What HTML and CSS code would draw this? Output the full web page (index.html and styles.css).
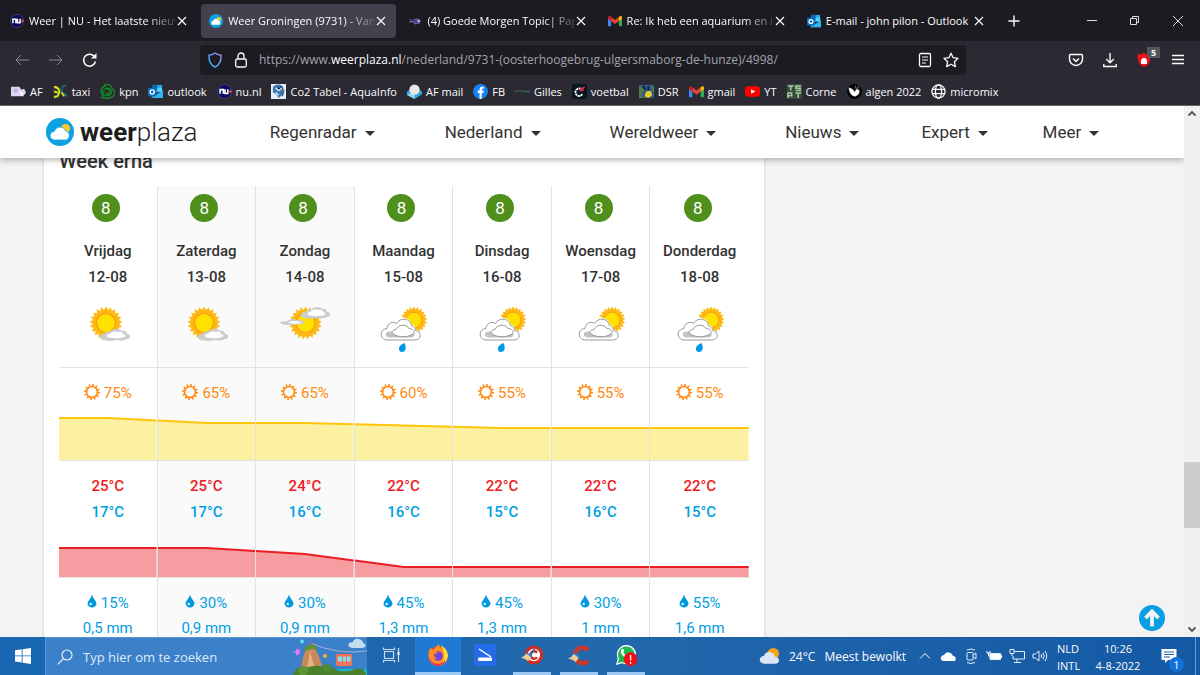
FILE: index.html
```html
<!DOCTYPE html>
<html lang="nl">
<head>
<meta charset="utf-8">
<title>Weer Groningen (9731)</title>
<link rel="stylesheet" href="styles.css">
</head>
<body>
<svg class="defs" aria-hidden="true">
  <symbol id="x" viewBox="0 0 14 14"><path d="M3 3l8 8M11 3l-8 8" stroke="currentColor" stroke-width="1.2" fill="none"/></symbol>
  <symbol id="nu" viewBox="0 0 16 16"><circle cx="8" cy="8" r="7.5" fill="#0b0b5c" stroke="#5b5b9a" stroke-width=".6"/><path d="M3.3 10.500V6h3.400v4.500M8.500 5.500V10h3V5.500" stroke="#fff" stroke-width="1.700" fill="none"/><path d="M12.500 8h3.500M14.200 6.300v3.400" stroke="#f0444c" stroke-width="1.300"/></symbol>
  <symbol id="wp" viewBox="0 0 28 28"><circle cx="14" cy="14" r="14" fill="#0ba1e2"/><circle cx="19.500" cy="10.500" r="4.600" fill="#fdc82f"/><path d="M8.500 22a4.300 4.300 0 0 1-.3-8.600 6 6 0 0 1 11.300-.6 4.800 4.800 0 0 1 .8 9.200z" fill="#fff" stroke="#0ba1e2" stroke-width=".8"/></symbol>
  <symbol id="fish" viewBox="0 0 16 16"><path d="M1 5l4 2q4-3 8-1l2 2-2 3-5 1-3-3-4 1 2-3z" fill="#6a67b5"/><path d="M3 7l9 1M6 9l6 1" stroke="#27255a"/><circle cx="12" cy="8" r="1" fill="#fff"/></symbol>
  <symbol id="gm" viewBox="0 0 16 16"><path d="M0 4v10h3.600V7z" fill="#4285f4"/><path d="M16 4v10h-3.600V7z" fill="#34a853"/><path d="M3.600 3.500L8 6.800l4.400-3.300v4.600L8 11.400 3.600 8.100z" fill="#ea4335"/><path d="M0 4.200C0 2 2 1.800 3.600 3.500v4.600L0 5.500z" fill="#c5221f"/><path d="M16 4.200C16 2 14 1.800 12.400 3.500v4.600L16 5.500z" fill="#fbbc04"/></symbol>
  <symbol id="ol" viewBox="0 0 16 16"><path d="M5 1h10v8H5z" fill="#28a8ea"/><path d="M5 1h5v5H5z" fill="#0a67c0"/><path d="M10 4h5v4h-5z" fill="#50d9ff"/><path d="M4 7l6 4 6-4v8H4z" fill="#1490df"/><path d="M4 15l12-8v8z" fill="#35b5f0"/><rect x="0" y="4" width="9" height="9" rx="1" fill="#0f6cbd"/><circle cx="4.500" cy="8.500" r="2.200" stroke="#fff" stroke-width="1.400" fill="none"/></symbol>
  <symbol id="sun" viewBox="-17 -17 34 34"><g fill="#fdb813"><path id="t" d="M0-16.500L14.300 8.250H-14.300z"/><use href="#t" transform="rotate(17.143)"/><use href="#t" transform="rotate(34.286)"/><use href="#t" transform="rotate(51.429)"/><use href="#t" transform="rotate(68.571)"/><use href="#t" transform="rotate(85.714)"/><use href="#t" transform="rotate(102.857)"/></g><circle r="9.500" fill="#ffe100" stroke="#fa9a1c" stroke-width="1.200"/></symbol>
  <symbol id="puff" viewBox="0 0 32 13"><path d="M5 12.500c-6-1-5-7 .5-6.500C7 3 10 3 11.500 3.500 14 0 21 0 23 3c4-1 5 2 5 3 5 0 4 5 0 5-3 2-8 2-10 1-4 1-9 1.500-13 0z" fill="#cdcdcd"/><path d="M10 9.500c-4-1-2-4 1-3.500 1-3 6-3 8-2 3-1 5 0 5 2 3 0 3 3 0 3.500-4 1-10 1-14 0z" fill="#fff"/></symbol>
  <symbol id="w-clear" viewBox="0 0 52 52"><use href="#sun" x="9" y="3" width="34" height="34"/><use href="#puff" x="19" y="25" width="32" height="13"/></symbol>
  <symbol id="w-veil" viewBox="0 0 52 52" overflow="visible"><use href="#sun" x="11.500" y="3" width="34" height="34"/><use href="#puff" x="23" y="3" width="31" height="13"/><path d="M3 19.500c1-2 5-1 7-1.500 4-3 8-2 10-1 4-1 5 1 8 2-1 3-7 2-10 3H9c-3 0-5-1-6-2.500z" fill="#cdcdcd"/><path d="M11 19.500c4-2 9-2 14 0-4 2-10 1-14 0z" fill="#fff"/></symbol>
  <symbol id="w-cloud" viewBox="0 0 52 52"><use href="#sun" x="25" y="3" width="28" height="28"/><path d="M12 37C3 37 3 26 11 25.500c0-5 6-8 9.500-5 4-7 14-5 15 2 3 1 4 3 4 5 7 2 6 9.500-1 9.500z" fill="#fff" stroke="#fff" stroke-width="3"/><path d="M13 37C4 37 4 26 12 25.500c0-5 6-8 9.500-5 4-7 14-5 15 2 3 1 4 3 4 5 7 2 6 9.500-1 9.500z" fill="#fff" stroke="#999" stroke-width="1"/><path d="M14 34.500c-5-1-4-7 2-6h19c6-1 6 6 1 6z" fill="#c3c3c3"/><path d="M19 31.500c-4-2-1-5 2-5 2-5 10-6 13-1 5 0 7 5 3 6-5 3-13 3-18 0z" fill="#fff" stroke="#8d8d8d" stroke-width=".9"/></symbol>
  <symbol id="w-rain" viewBox="0 0 52 52"><use href="#w-cloud" width="52" height="52"/><path d="M29.500 40q1.500 3 1.200 5.500-.8 3.500-3.700 3.500-3.400-.2-3-4 .5-3.200 5.500-5z" fill="#0099e5"/></symbol>
  <symbol id="s" viewBox="0 0 16 16"><g fill="none" stroke="#ff8a0f"><circle cx="8" cy="8" r="5.500" stroke-width="1.700"/><circle cx="8" cy="8" r="7" stroke-width="1.900" stroke-dasharray="1.600 2.065"/></g></symbol>
  <symbol id="d" viewBox="0 0 10 14"><path d="M5 .5q.7 3 2.800 5.500Q9.500 8 9.500 9.500a4.500 4 0 0 1-9 0Q.5 8 2.200 6 4.300 3.500 5 .5z" fill="#0099e0"/><circle cx="3.700" cy="10" r="1.200" fill="#e6f6fd"/></symbol>
  <symbol id="broom" viewBox="0 0 24 24"><path d="M21 4l-8 9" stroke="#2a67a5" stroke-width="3"/><path d="M8 10q6 0 8 6l-5 6Q7 18 0 17q6-2 8-7z" fill="#f5d6a2"/><path d="M8 10q5 1 8 6" stroke="#2686c9" stroke-width="2.500" fill="none"/><path d="M4 17q5-1 7 4M7 14q5 1 6 5" stroke="#d6a76a" fill="none" stroke-width=".7"/></symbol>
</svg>

<header class="browser">
  <div class="tabstrip">
    <div class="tabs" role="tablist">
      <div class="tab" role="tab"><svg class="fav"><use href="#nu"/></svg><span class="tab-title">Weer | NU - Het laatste nieuw</span><button class="close" aria-label="Tabblad sluiten"><svg><use href="#x"/></svg></button></div>
      <div class="tab active" role="tab" aria-selected="true"><svg class="fav"><use href="#wp"/></svg><span class="tab-title">Weer Groningen (9731) - Van</span><button class="close" aria-label="Tabblad sluiten"><svg><use href="#x"/></svg></button></div>
      <div class="tab" role="tab"><svg class="fav"><use href="#fish"/></svg><span class="tab-title">(4) Goede Morgen Topic| Pagi</span><button class="close" aria-label="Tabblad sluiten"><svg><use href="#x"/></svg></button></div>
      <div class="tab" role="tab"><svg class="fav"><use href="#gm"/></svg><span class="tab-title">Re: Ik heb een aquarium en is</span><button class="close" aria-label="Tabblad sluiten"><svg><use href="#x"/></svg></button></div>
      <div class="tab" role="tab"><svg class="fav"><use href="#ol"/></svg><span class="tab-title full">E-mail - john pilon - Outlook</span><button class="close" aria-label="Tabblad sluiten"><svg><use href="#x"/></svg></button></div>
    </div>
    <button class="icon-btn new-tab" aria-label="Nieuw tabblad"><svg viewBox="0 0 16 16"><path d="M8 2.500v11M2.500 8h11" stroke="#fbfbfe" stroke-width="1.400"/></svg></button>
    <div class="window-controls">
      <button class="icon-btn" aria-label="Minimaliseren"><svg viewBox="0 0 16 16"><path d="M3 7.500h10" stroke="#ddd"/></svg></button>
      <button class="icon-btn" aria-label="Verkleinen"><svg viewBox="0 0 16 16"><path d="M3.500 5.500h6v6h-6zM5.500 5.500v-2h6v6h-2" stroke="#ddd" fill="none"/></svg></button>
      <button class="icon-btn" aria-label="Sluiten"><svg viewBox="0 0 16 16"><path d="M3 3l10 10M13 3L3 13" stroke="#ddd"/></svg></button>
    </div>
  </div>

  <div class="toolbar">
    <div class="nav-buttons">
      <button class="icon-btn dim" aria-label="Vorige"><svg viewBox="0 0 16 16"><path d="M15 8H2M7 3L2 8l5 5" stroke="currentColor" fill="none"/></svg></button>
      <button class="icon-btn dim" aria-label="Volgende"><svg viewBox="0 0 16 16"><path d="M1 8h13M9 3l5 5-5 5" stroke="currentColor" fill="none"/></svg></button>
      <button class="icon-btn" aria-label="Vernieuwen"><svg viewBox="0 0 16 16"><path d="M13.500 9.500A6 6 0 1 1 12 4" stroke="#fbfbfe" stroke-width="1.500" fill="none"/><path d="M14.500 1v5.500H9z" fill="#fbfbfe"/></svg></button>
    </div>
    <div class="urlbar">
      <svg class="i16" viewBox="0 0 16 16"><defs><linearGradient id="sh" x1="0" y1="1" x2="1" y2="0"><stop offset="0" stop-color="#1fb9f5"/><stop offset="1" stop-color="#a48bff"/></linearGradient></defs><path d="M8 1q3 2 6 2.200Q14.500 12 8 15 1.500 12 2 3.200 5 3 8 1z" fill="none" stroke="url(#sh)" stroke-width="1.400"/></svg>
      <svg class="i16" viewBox="0 0 16 16"><rect x="2.700" y="7" width="10.600" height="8" rx="1.500" fill="none" stroke="#fbfbfe" stroke-width="1.300"/><path d="M5 7V4a3 3 0 0 1 6 0v3" fill="none" stroke="#fbfbfe" stroke-width="1.300"/></svg>
      <div class="url" role="textbox" contenteditable="true" spellcheck="false" aria-label="Adres">https://www.<b>weerplaza.nl</b>/nederland/9731-(oosterhoogebrug-ulgersmaborg-de-hunze)/4998/</div>
      <button class="icon-btn" aria-label="Leesmodus"><svg viewBox="0 0 16 16"><rect x="2.500" y="1.500" width="11" height="13" rx="1.500" fill="none" stroke="#fbfbfe" stroke-width="1.300"/><path d="M5 5h6M5 8h6M5 11h4" stroke="#fbfbfe" stroke-width="1.200"/></svg></button>
      <button class="icon-btn" aria-label="Bladwijzer"><svg viewBox="0 0 16 16"><path d="M8 1.200l2.100 4.500 4.900.6-3.600 3.400.9 4.900L8 12.200l-4.300 2.400.9-4.900L1 6.300l4.900-.6z" fill="none" stroke="#fbfbfe" stroke-width="1.300" stroke-linejoin="round"/></svg></button>
    </div>
    <div class="actions">
      <button class="icon-btn" aria-label="Pocket"><svg viewBox="0 0 16 16"><path d="M2.500 2.500h11q1 0 1 1V7a6.500 6.500 0 0 1-13 0V3.500q0-1 1-1z" fill="none" stroke="#fbfbfe" stroke-width="1.400"/><path d="M5 6.500L8 9.400l3-2.900" fill="none" stroke="#fbfbfe" stroke-width="1.500"/></svg></button>
      <button class="icon-btn" aria-label="Downloads"><svg viewBox="0 0 16 16"><path d="M8 1v9.500M4.200 7L8 10.700 11.800 7M1.800 12v2.500h12.400V12" fill="none" stroke="#fbfbfe" stroke-width="1.400"/></svg></button>
      <button class="icon-btn badge-host" aria-label="Blokkering"><svg viewBox="0 0 16 16"><path d="M8 1q3 1.500 6.500 1.500Q15 12 8 15.500 1 12 1.500 2.500 5 2.500 8 1z" fill="#f01018"/><path d="M5 7.500h6V12H5zM6.300 7.500V6h3.400v1.500" fill="#fff"/></svg><span class="badge">5</span></button>
      <button class="icon-btn" aria-label="Menu"><svg viewBox="0 0 16 16"><path d="M2 3.500h12M2 7.500h12M2 11.500h12" stroke="#fbfbfe" stroke-width="1.300"/></svg></button>
    </div>
  </div>

  <nav class="bookmarks" aria-label="Bladwijzers">
    <a href="#"><svg viewBox="0 0 16 16"><path d="M0 3h9l2 3 3-1 2 4-3 4H0z" fill="#dcd8f2"/><path d="M3 5h4v4H3z" fill="#bcb4e0"/><path d="M9 8l4 1-2 4z" fill="#fff"/></svg>AF</a>
    <a href="#"><svg viewBox="0 0 16 16"><path d="M1 3.500q4-1 6 4.500l-2 5-4 1M1 8l4 1" fill="none" stroke="#d8dc20" stroke-width="2.200"/><path d="M14 1.500q-5 0-5 5 0 3 5 5l1 2" fill="none" stroke="#1f6470" stroke-width="2.200"/><path d="M9 9l3 4" stroke="#d8dc20" stroke-width="2"/></svg>taxi</a>
    <a href="#"><svg viewBox="0 0 16 16"><path d="M4 1q8-2 9 4 5 4 1 8-6 4-12 1 2-2-1-5 0-6 5-7M6 4.500q5-1 6.500 3.500-1 5-6 4.500-5-1-3-5 2-4 5-2 3 2 1 5-3 1-3.500-1.500" fill="none" stroke="#0d9a22" stroke-width="1.200"/></svg>kpn</a>
    <a href="#"><svg><use href="#ol"/></svg>outlook</a>
    <a href="#"><svg><use href="#nu"/></svg>nu.nl</a>
    <a href="#"><svg viewBox="0 0 16 16"><path d="M0 0h16v16H0z" fill="#e6eef5"/><path d="M2 3q6-5 11 0v8l-5 4q-2-5-6-6z" fill="#3a78b5"/><path d="M5 4l3 3 4-3M5 9l3 3" stroke="#e6eef5" stroke-width="1.600"/><path d="M10 2l4 5-2 6" stroke="#173d6b" fill="none"/></svg>Co2 Tabel - AquaInfo</a>
    <a href="#"><svg viewBox="0 0 16 16"><path d="M0 8l8-5 8 5v3l-8 5-8-4z" fill="#2ea7e0"/><path d="M0 11l8 5V9z" fill="#9ed5f1"/><circle cx="8" cy="6" r="5.500" fill="#e9e7e4"/></svg>AF mail</a>
    <a href="#"><svg viewBox="0 0 16 16"><circle cx="8" cy="8" r="8" fill="#1382f5"/><path d="M7 16V9.500H5V7h2V5.500Q7 3 10 3h1.500v2H10Q9.300 5 9.300 6v1h2.200l-.4 2.500H9.300V16z" fill="#fff"/></svg>FB</a>
    <a href="#"><svg viewBox="0 0 16 16"><path d="M0 7.500h9" stroke="#446b33" stroke-width="1.400" stroke-dasharray="2 .5"/><path d="M9 8h7" stroke="#327286" stroke-width="1.400" stroke-dasharray="2 .5"/></svg>Gilles</a>
    <a href="#"><svg viewBox="0 0 16 16"><rect width="16" height="16" rx="2.500" fill="#051820"/><path d="M11 11a4 4 0 1 1-2-6" fill="none" stroke="#fff" stroke-width="2" stroke-dasharray="2.500 .6"/><path d="M8 6q3-4 6-3l-2 3 1 1-4 1z" fill="#ef2544"/></svg>voetbal</a>
    <a href="#"><svg viewBox="0 0 16 16"><path d="M0 1h16v14H0z" fill="#315c87"/><path d="M0 2l6 3-4 8 5 2H0zM12 1l4 3v6z" fill="#567b46"/><path d="M7 9q3-3 6-1l1 4-4 3-4-2z" fill="#e7cb26"/><path d="M4 2l3 4M10 2v5" stroke="#0b2139" stroke-width="2"/></svg>DSR</a>
    <a href="#"><svg><use href="#gm"/></svg>gmail</a>
    <a href="#"><svg viewBox="0 0 16 16"><rect y="2.500" width="16" height="11" rx="3" fill="#f00"/><path d="M6.500 5.500v5L11 8z" fill="#fff"/></svg>YT</a>
    <a href="#"><svg viewBox="0 0 16 16"><path d="M0 0h16v16H0z" fill="#384c3c"/><path d="M1 2h6M4 2v5M15 2H9.500v2.500H14V7H9M1 15V9.500h4v3H1M9 9.500h6M12 9.500V15" fill="none" stroke="#a7c9a0" stroke-width="1.600"/></svg>Corne</a>
    <a href="#"><svg viewBox="0 0 16 16"><circle cx="8" cy="8" r="8" fill="#050505"/><path d="M2 4q5 1 6 5 2-5 5-2 1 4-4 6-6 0-7-9zM9 2l1 4M13 2l-3 5" fill="#fff" stroke="#fff" stroke-width=".5"/></svg>algen 2022</a>
    <a href="#"><svg viewBox="0 0 16 16"><g fill="none" stroke="#fbfbfe" stroke-width="1.400"><circle cx="8" cy="8" r="7"/><ellipse cx="8" cy="8" rx="3.300" ry="7"/><path d="M1.500 5.700h13M1.500 10.300h13"/></g></svg>micromix</a>
  </nav>
</header>

<div class="viewport">
  <div class="page">
    <header class="site-header">
      <a class="logo" href="#"><svg><use href="#wp"/></svg><span><b>weer</b>plaza</span></a>
      <nav class="site-nav">
        <a href="#">Regenradar</a><a href="#">Nederland</a><a href="#">Wereldweer</a><a href="#">Nieuws</a><a href="#">Expert</a><a href="#">Meer</a>
      </nav>
    </header>
    <main class="card">
      <h2>Week erna</h2>
      <table class="forecast">
        <thead>
          <tr>
            <th scope="col"><span class="score">8</span>Vrijdag<br>12-08<svg class="weather"><use href="#w-clear"/></svg></th>
            <th scope="col" class="weekend"><span class="score">8</span>Zaterdag<br>13-08<svg class="weather"><use href="#w-clear"/></svg></th>
            <th scope="col" class="weekend"><span class="score">8</span>Zondag<br>14-08<svg class="weather"><use href="#w-veil"/></svg></th>
            <th scope="col"><span class="score">8</span>Maandag<br>15-08<svg class="weather"><use href="#w-rain"/></svg></th>
            <th scope="col"><span class="score">8</span>Dinsdag<br>16-08<svg class="weather"><use href="#w-rain"/></svg></th>
            <th scope="col"><span class="score">8</span>Woensdag<br>17-08<svg class="weather"><use href="#w-cloud"/></svg></th>
            <th scope="col"><span class="score">8</span>Donderdag<br>18-08<svg class="weather"><use href="#w-rain"/></svg></th>
          </tr>
        </thead>
        <tbody>
          <tr class="sunshine">
            <td><svg class="ic-sun"><use href="#s"/></svg>75%<svg class="chart" viewBox="0 0 100 50" preserveAspectRatio="none"><path class="area" d="M0 50V8H50L100 10.500V50z"/><path class="line" d="M0 8H50L100 10.500"/></svg></td>
            <td class="weekend"><svg class="ic-sun"><use href="#s"/></svg>65%<svg class="chart" viewBox="0 0 100 50" preserveAspectRatio="none"><path class="area" d="M0 50V10.500L50 13H100V50z"/><path class="line" d="M0 10.500L50 13H100"/></svg></td>
            <td class="weekend"><svg class="ic-sun"><use href="#s"/></svg>65%<svg class="chart" viewBox="0 0 100 50" preserveAspectRatio="none"><path class="area" d="M0 50V13H50L100 14.300V50z"/><path class="line" d="M0 13H50L100 14.300"/></svg></td>
            <td><svg class="ic-sun"><use href="#s"/></svg>60%<svg class="chart" viewBox="0 0 100 50" preserveAspectRatio="none"><path class="area" d="M0 50V14.300L50 15.500 100 16.800V50z"/><path class="line" d="M0 14.300L50 15.500 100 16.800"/></svg></td>
            <td><svg class="ic-sun"><use href="#s"/></svg>55%<svg class="chart" viewBox="0 0 100 50" preserveAspectRatio="none"><path class="area" d="M0 50V16.800L50 18H100V50z"/><path class="line" d="M0 16.800L50 18H100"/></svg></td>
            <td><svg class="ic-sun"><use href="#s"/></svg>55%<svg class="chart" viewBox="0 0 100 50" preserveAspectRatio="none"><path class="area" d="M0 50V18H100V50z"/><path class="line" d="M0 18H100"/></svg></td>
            <td><svg class="ic-sun"><use href="#s"/></svg>55%<svg class="chart" viewBox="0 0 100 50" preserveAspectRatio="none"><path class="area" d="M0 50V18H100V50z"/><path class="line" d="M0 18H100"/></svg></td>
          </tr>
          <tr class="temperature">
            <td>25°C<span class="min">17°C</span><svg class="chart" viewBox="0 0 100 37" preserveAspectRatio="none"><path class="area" d="M0 37V8H100V37z"/><path class="line" d="M0 8H100"/></svg></td>
            <td class="weekend">25°C<span class="min">17°C</span><svg class="chart" viewBox="0 0 100 37" preserveAspectRatio="none"><path class="area" d="M0 37V8H50L100 11V37z"/><path class="line" d="M0 8H50L100 11"/></svg></td>
            <td class="weekend">24°C<span class="min">16°C</span><svg class="chart" viewBox="0 0 100 37" preserveAspectRatio="none"><path class="area" d="M0 37V11L50 14 100 20.500V37z"/><path class="line" d="M0 11L50 14 100 20.500"/></svg></td>
            <td>22°C<span class="min">16°C</span><svg class="chart" viewBox="0 0 100 37" preserveAspectRatio="none"><path class="area" d="M0 37V20.500L50 27H100V37z"/><path class="line" d="M0 20.500L50 27H100"/></svg></td>
            <td>22°C<span class="min">15°C</span><svg class="chart" viewBox="0 0 100 37" preserveAspectRatio="none"><path class="area" d="M0 37V27H100V37z"/><path class="line" d="M0 27H100"/></svg></td>
            <td>22°C<span class="min">16°C</span><svg class="chart" viewBox="0 0 100 37" preserveAspectRatio="none"><path class="area" d="M0 37V27H100V37z"/><path class="line" d="M0 27H100"/></svg></td>
            <td>22°C<span class="min">15°C</span><svg class="chart" viewBox="0 0 100 37" preserveAspectRatio="none"><path class="area" d="M0 37V27H100V37z"/><path class="line" d="M0 27H100"/></svg></td>
          </tr>
          <tr class="rain">
            <td><svg class="ic-drop"><use href="#d"/></svg>15%<br>0,5 mm</td>
            <td class="weekend"><svg class="ic-drop"><use href="#d"/></svg>30%<br>0,9 mm</td>
            <td class="weekend"><svg class="ic-drop"><use href="#d"/></svg>30%<br>0,9 mm</td>
            <td><svg class="ic-drop"><use href="#d"/></svg>45%<br>1,3 mm</td>
            <td><svg class="ic-drop"><use href="#d"/></svg>45%<br>1,3 mm</td>
            <td><svg class="ic-drop"><use href="#d"/></svg>30%<br>1 mm</td>
            <td><svg class="ic-drop"><use href="#d"/></svg>55%<br>1,6 mm</td>
          </tr>
        </tbody>
      </table>
    </main>
    <a class="to-top" href="#" aria-label="Naar boven"><svg viewBox="0 0 26 26"><circle cx="13" cy="13" r="13" fill="#0a9fe3"/><path d="M13 21.500V7M6.500 13L13 6.500l6.500 6.500" fill="none" stroke="#f3f3f3" stroke-width="3.800"/></svg></a>
  </div>
  <div class="scrollbar" aria-hidden="true">
    <svg viewBox="0 0 16 16"><path d="M4.500 9.500L8 6l3.500 3.500" fill="none" stroke="#555" stroke-width="1.800"/></svg>
    <div class="track"><div class="thumb"></div></div>
    <svg viewBox="0 0 16 16"><path d="M4.500 6.500L8 10l3.500-3.500" fill="none" stroke="#555" stroke-width="1.800"/></svg>
  </div>
</div>

<footer class="taskbar">
  <button class="start" aria-label="Start"><svg viewBox="0 0 16 16"><path d="M0 2.300L6.700 1.300v6.200H0zM7.500 1.200L16 0v7.500H7.500zM0 8.300h6.700v6.300L0 13.600zM7.500 8.300H16V16l-8.500-1.200z" fill="#fff"/></svg></button>
  <div class="search">
    <svg class="lens" viewBox="0 0 16 16"><circle cx="10" cy="6" r="5" fill="none" stroke="#e8f1fb" stroke-width="1.200"/><path d="M6.500 9.500L.7 15.300" stroke="#e8f1fb" stroke-width="1.200"/></svg>
    <input type="search" aria-label="Zoeken" placeholder="Typ hier om te zoeken">
    <svg class="scene" viewBox="0 0 74 38"><path d="M17 5q28 12 57 8" fill="none" stroke="#a9aedb" stroke-width="1"/><circle cx="9" cy="3.500" r="2" fill="#62d8f2"/><circle cx="18" cy="5" r="1.500" fill="#a05ad0"/><path d="M4 9l1 3 3-1-2 3 2 2-3 0-2 2v-3l-3-1 3-1z" fill="#e97bf2"/><path d="M8 33q1-13 4-19 6-9 12 0 4 8 6 19z" fill="#c98a5b"/><path d="M14 31l3-18 5 18z" fill="#e7b184"/><path d="M11 13q1-6 7-7 6 1 6 6-3-1-6-1-4 1-7 2z" fill="#5c9339"/><circle cx="32" cy="18" r="2" fill="#f4b323"/><path d="M59 10q-5-1-3-5 3-1 4-1 1-4 6-3 4 1 4 4 4 1 2 4-1 1-4 1z" fill="#c4dcef"/><path d="M52 13v4" stroke="#db6a50"/><rect x="43" y="16" width="16" height="12" rx="2" fill="#f27458"/><path d="M45 18.500h4v5h-4zM50 18.500h3v5h-3zM54 18.500h3.500v5H54z" fill="#7de4f5"/><path d="M45 31h29v7H45z" fill="#18b4c9"/><path d="M0 38q2-11 12-8 14-5 21 0 7-3 11 3 15 1 18-2h8l4 7z" fill="#4b812d"/><circle cx="10" cy="33" r="5" fill="#5b9634"/><circle cx="34" cy="30" r="4" fill="#4d8a30"/></svg>
  </div>
  <div class="apps">
    <button aria-label="Taakweergave"><svg viewBox="0 0 22 22"><g fill="none" stroke="#c9daed" stroke-width="1.200"><path d="M4.500 7.500h9v7h-9zM3.500 3.500v2h11v-2M3.500 18.500v-2h11v2"/><path d="M18.500 4v14"/></g><path d="M17.500 8h2v3h-2z" fill="#fff"/></svg></button>
    <button class="current open" aria-label="Firefox"><svg viewBox="0 0 22 22"><circle cx="11" cy="12" r="9.800" fill="#f8492f"/><path d="M1.500 10Q2 5 4 4q1 2 3 2Q9 2 12 0q0 3 3 4l1 2q4 1 5 6-1 9-10 10-9-1-9.500-12z" fill="#ff9123"/><path d="M14 1q6 4 7 10-1 9-9 11 6-5 5-12-1-5-3-9z" fill="#ffdc3a"/><path d="M2 12q2 8 10 8 5-1 6-5 1 6-7 7-8-1-9-10z" fill="#ee2d5d"/><circle cx="11" cy="12" r="4.800" fill="#7542d5"/><path d="M4 8q4-2 7 1-2 1-4 1 0 4 4 5-6 1-7-7z" fill="#ff8a24"/></svg></button>
    <button aria-label="Scannen"><svg viewBox="0 0 22 22"><path d="M0 0h22v22H0z" fill="#246be8"/><path d="M5 5l12 8" stroke="#fff" stroke-width="1.500"/><rect x="4" y="13.500" width="14" height="3.500" rx="1" fill="#fff"/></svg></button>
    <button class="open" aria-label="CCleaner Browser"><svg viewBox="0 0 24 24"><circle cx="14" cy="12" r="8.500" fill="#fff" stroke="#cf2e27" stroke-width="3.500"/><path d="M17.500 9.500a4 4 0 1 0 0 5" fill="none" stroke="#cf2e27" stroke-width="2.800"/><use href="#broom" y="3" width="17" height="17"/></svg></button>
    <button class="open" aria-label="CCleaner"><svg viewBox="0 0 24 24"><path d="M22 6.500a8.500 8.500 0 1 0 0 12" fill="none" stroke="#c9392d" stroke-width="5"/><use href="#broom" y="3" width="18" height="18"/></svg></button>
    <button class="open" aria-label="WhatsApp"><svg viewBox="0 0 24 24"><path d="M1 23l2-7A10.500 10.500 0 1 1 8 21z" fill="#fff"/><path d="M3 21l1.500-5A9 9 0 1 1 8 19.500z" fill="#21b94d"/><path d="M7 6q2-2 3 1l-1 2q2 3 4 4l2-1q2 1 1 2-3 3-7-1-4-4-2-7z" fill="#fff"/><circle cx="17" cy="16.500" r="7.500" fill="#f00f14"/><path d="M17 12v6M17 19.500v2" stroke="#fff" stroke-width="1.500"/></svg></button>
  </div>
  <div class="weather-widget"><svg viewBox="0 0 22 18"><circle cx="15" cy="6.500" r="6" fill="#f7a51c"/><path d="M5 17Q0 16 1 12q1-3 4-3 2-5 7-4 4 1 5 5 4 0 4 4-1 3-4 3z" fill="#dbe7f7"/></svg><span>24°C</span><span>Meest bewolkt</span></div>
  <div class="tray">
    <svg viewBox="0 0 16 16"><path d="M3 10.500L8 5.500l5 5" stroke="#fff" fill="none"/></svg>
    <svg viewBox="0 0 16 16"><path d="M3 13q-3-1-2-4 1-2 3-2 3-5 8-1 0 2 2 2 3 2 1 5z" fill="#fff"/></svg>
    <svg viewBox="0 0 16 16"><g fill="none" stroke="#e4eefa"><rect x="4" y="4.500" width="6" height="7.500" rx="1"/><path d="M10 7l3-2v6l-3-2M4 2q4-2 8 0M4 14.500q4 2 8 0"/></g></svg>
    <svg viewBox="0 0 16 16"><path d="M4 5.500h10.500v6H4z" fill="#fff" stroke="#e4eefa"/><path d="M1 3v2h3V3M2.500 5v3h2M15.500 7v3" fill="none" stroke="#fff"/></svg>
    <svg viewBox="0 0 16 16"><path d="M5 3.500h10.500v7.500H4V8M8 11v3M5 14.500h7M1 1.500h4v4H1zM3 5.500V8" fill="none" stroke="#e4eefa"/></svg>
    <svg viewBox="0 0 16 16"><path d="M1 6h2.500L7 3v10L3.500 10H1zM9 6q1.500 2 0 4M11 4.500q2.500 3.500 0 7M13 3q3.500 5 0 10" fill="none" stroke="#e4eefa"/></svg>
  </div>
  <div class="stack">NLD<br>INTL</div>
  <div class="stack clock">10:26<br>4-8-2022</div>
  <button class="notify" aria-label="Meldingen"><svg viewBox="0 0 16 16"><path d="M.5 1h15v11H7l-3 3v-3H.500z" fill="#fff"/><path d="M3 4h10M3 6.500h10M3 9h6" stroke="#1a5ea9"/></svg><span class="count">1</span></button>
</footer>
</body>
</html>
```

FILE: styles.css
```css
* { box-sizing: border-box; }

body {
  margin: 0;
  height: 100vh;
  display: flex;
  flex-direction: column;
  overflow: hidden;
  font-family: "Open Sans", "Noto Sans", sans-serif;
  font-size: 11px;
  color: #fbfbfe;
}

button {
  border: 0;
  padding: 0;
  background: none;
  color: inherit;
  font: inherit;
}

a { color: inherit; text-decoration: none; }
svg { flex: none; }
.defs { position: absolute; width: 0; height: 0; }

/* Browser chrome */
.browser {
  flex: none;
  background: #2b2a33;
  border-bottom: 1px solid #66656b;
}

.tabstrip {
  display: flex;
  align-items: center;
  height: 41px;
  background: #1c1b22;
}

.tabs { display: flex; flex: 0 1 996px; min-width: 0; }

.tab {
  display: flex;
  align-items: center;
  flex: 1 1 0;
  min-width: 0;
  height: 34px;
  margin: 0 2px;
  padding: 0 8px;
  border-radius: 4px;
}

.tab.active { background: #42414d; }
.fav { width: 14px; height: 14px; margin-right: 5px; }

.tab-title {
  flex: 1;
  overflow: hidden;
  white-space: nowrap;
  mask-image: linear-gradient(to right, #000 calc(100% - 30px), rgba(0, 0, 0, .2));
}

.tab-title.full { mask-image: none; }
.close, .close svg { display: block; width: 14px; height: 14px; }

.icon-btn {
  display: grid;
  place-items: center;
  width: 26px;
  height: 30px;
}

.icon-btn svg { width: 16px; height: 16px; }
.icon-btn.dim { color: #8a8991; }
.icon-btn.new-tab { margin-left: 5px; }

.window-controls { display: flex; gap: 17px; margin-left: auto; padding-right: 9px; }

.toolbar { display: flex; align-items: center; height: 37px; }
.nav-buttons { display: flex; gap: 8px; flex: none; width: 200px; padding-left: 9px; }

.urlbar {
  display: flex;
  align-items: center;
  gap: 10px;
  flex: 0 1 766px;
  min-width: 0;
  height: 30px;
  padding: 0 2px 0 7px;
  border-radius: 4px;
  background: #1c1b22;
}

.urlbar .icon-btn + .icon-btn { margin-left: -10px; }
.i16 { width: 16px; height: 16px; }

.url {
  flex: 1;
  overflow: hidden;
  white-space: nowrap;
  font-size: 12px;
  color: #a3a3a8;
}

.url b { font-weight: 400; color: #fbfbfe; }
.actions { display: flex; gap: 8px; margin-left: auto; padding-right: 9px; }
.badge-host { position: relative; }

.badge {
  position: absolute;
  top: 2px;
  right: -3px;
  width: 13px;
  background: #55555a;
  font-size: 9px;
  font-weight: 700;
  line-height: 11px;
}

.bookmarks {
  display: flex;
  align-items: center;
  gap: 10px;
  height: 27px;
  padding-left: 11px;
  white-space: nowrap;
}

.bookmarks a { display: flex; align-items: center; gap: 4px; }
.bookmarks svg { width: 15px; height: 15px; }

/* Page */
.viewport { display: flex; flex: 1; min-height: 0; }

.page {
  position: relative;
  flex: 1;
  min-width: 0;
  overflow: hidden;
  background: #f3f3f3;
  font-family: Roboto, sans-serif;
  color: #333;
}

.site-header {
  position: relative;
  z-index: 1;
  display: flex;
  align-items: center;
  height: 52px;
  padding: 0 58px 0 46px;
  background: #fff;
  box-shadow: 0 2px 6px rgba(0, 0, 0, .3);
}

.logo {
  display: flex;
  align-items: center;
  gap: 6px;
  flex: none;
  width: 188px;
  font-size: 26px;
  font-weight: 300;
  color: #1d1d1b;
}

.logo svg { width: 28px; height: 28px; }
.logo b { font-weight: 700; }

.site-nav {
  display: grid;
  grid-template-columns: 176fr 164fr 176fr 142fr 122fr 110fr;
  flex: 1;
  font-size: 17px;
  text-align: center;
}

.site-nav a::after {
  content: "";
  display: inline-block;
  margin-left: 8px;
  vertical-align: 2px;
  border: 5px solid transparent;
  border-top-color: #333;
  border-bottom: 0;
}

.card {
  max-width: 720px;
  margin-left: 44px;
  padding: 0 15px;
  background: #fff;
  box-shadow: 0 0 3px rgba(0, 0, 0, .2);
}

.card h2 {
  margin: -9px 0 0;
  padding-bottom: 13px;
  font-size: 20px;
  font-weight: 500;
  line-height: 24px;
}

.forecast {
  width: 100%;
  table-layout: fixed;
  border-spacing: 0;
  font-size: 15px;
  line-height: 26px;
  text-align: center;
}

.forecast th, .forecast td {
  padding: 0;
  border-right: 1px solid #e2e2e2;
  border-bottom: 1px solid #e2e2e2;
  font-weight: 500;
  vertical-align: top;
}

.forecast th:last-child, .forecast td:last-child { border-right: 0; }
.forecast th { padding: 8px 0 12px; }
.forecast .weekend { background: #fafafa; }

.score {
  display: block;
  width: 28px;
  margin: 0 auto 16px;
  border-radius: 50%;
  background: #4f8f1c;
  color: #fff;
  font-size: 17px;
  font-weight: 400;
  line-height: 28px;
}

.score, .weather { transform: translateX(-2px); }

.weather {
  display: block;
  width: 52px;
  height: 52px;
  margin: 13px auto 0;
  overflow: visible;
}

.forecast .sunshine td { padding-top: 12px; font-weight: 400; color: #ff8a0f; }
.forecast .temperature td { padding-top: 12px; color: #ed1c24; }
.forecast .rain td { padding-top: 13px; font-weight: 400; line-height: 25px; color: #009fe3; }
.min { display: block; color: #009fe3; }

.ic-sun { width: 16px; height: 16px; margin-right: 4px; vertical-align: -2px; }
.ic-drop { width: 10px; height: 14px; margin-right: 4px; vertical-align: 0; }

.chart { display: block; width: 100%; }
.sunshine .chart { height: 50px; margin-top: 4px; }
.temperature .chart { height: 37px; margin-top: 15px; }
.line { fill: none; stroke-width: 2; vector-effect: non-scaling-stroke; }
.sunshine .area { fill: #fcf1a0; }
.sunshine .line { stroke: #fec50c; }
.temperature .area { fill: #f79ca0; }
.temperature .line { stroke: #ea1c24; }

.to-top { position: absolute; right: 19px; bottom: 6px; }
.to-top svg { display: block; width: 26px; height: 26px; }

.scrollbar { display: flex; flex-direction: column; flex: none; width: 16px; background: #f0f0f0; }
.scrollbar svg { width: 16px; height: 16px; }
.track { flex: 1; padding-top: 340px; }
.thumb { height: 66px; background: #cdcdcd; }

/* Taskbar */
.taskbar {
  display: flex;
  align-items: stretch;
  flex: none;
  height: 38px;
  background: linear-gradient(to right, #1866b2, #2268ac 50%, #1459a4);
}

.start { flex: none; width: 45px; display: grid; place-items: center; }
.start svg { width: 16px; height: 16px; }

.search {
  display: flex;
  align-items: center;
  flex: none;
  width: 322px;
  padding-left: 11px;
  background: #3b80c8;
  border: 1px solid #5794d2;
  border-width: 1px 0 0 1px;
}

.lens { width: 16px; height: 16px; margin-right: 10px; }

.search input {
  flex: 1;
  min-width: 0;
  padding: 0;
  border: 0;
  outline: 0;
  background: none;
  font: inherit;
  font-size: 13px;
}

.search input::placeholder { color: #dcebfa; opacity: 1; }
.scene { width: 74px; height: 38px; }

.apps { display: flex; gap: 9px; padding-left: 5px; }

.apps button {
  width: 38px;
  display: grid;
  place-items: center;
  border-bottom: 3px solid transparent;
}

.apps svg { width: 22px; height: 22px; }
.apps .open { border-bottom-color: #9cc9f5; }
.apps .current { width: 46px; margin: 0 -4px; background: #1f7ad4; }

.weather-widget {
  display: flex;
  align-items: center;
  gap: 9px;
  margin-left: auto;
  font-size: 12px;
  white-space: nowrap;
}

.weather-widget svg { width: 21px; height: 18px; }

.tray { display: flex; align-items: center; gap: 7px; padding: 0 9px 0 11px; }
.tray svg { width: 16px; height: 16px; }

.stack { width: 22px; padding-top: 3px; line-height: 17px; text-align: center; }
.stack.clock { width: 50px; margin-left: 14px; }

.notify {
  position: relative;
  flex: none;
  width: 43px;
  margin: 0 4px 0 10px;
  padding-left: 8px;
  text-align: left;
  border-right: 1px solid #6c9bcc;
}

.notify svg { display: block; width: 16px; height: 16px; }

.count {
  position: absolute;
  left: 16px;
  bottom: 3px;
  width: 15px;
  border-radius: 50%;
  background: #1172dc;
  line-height: 15px;
  text-align: center;
}
```
